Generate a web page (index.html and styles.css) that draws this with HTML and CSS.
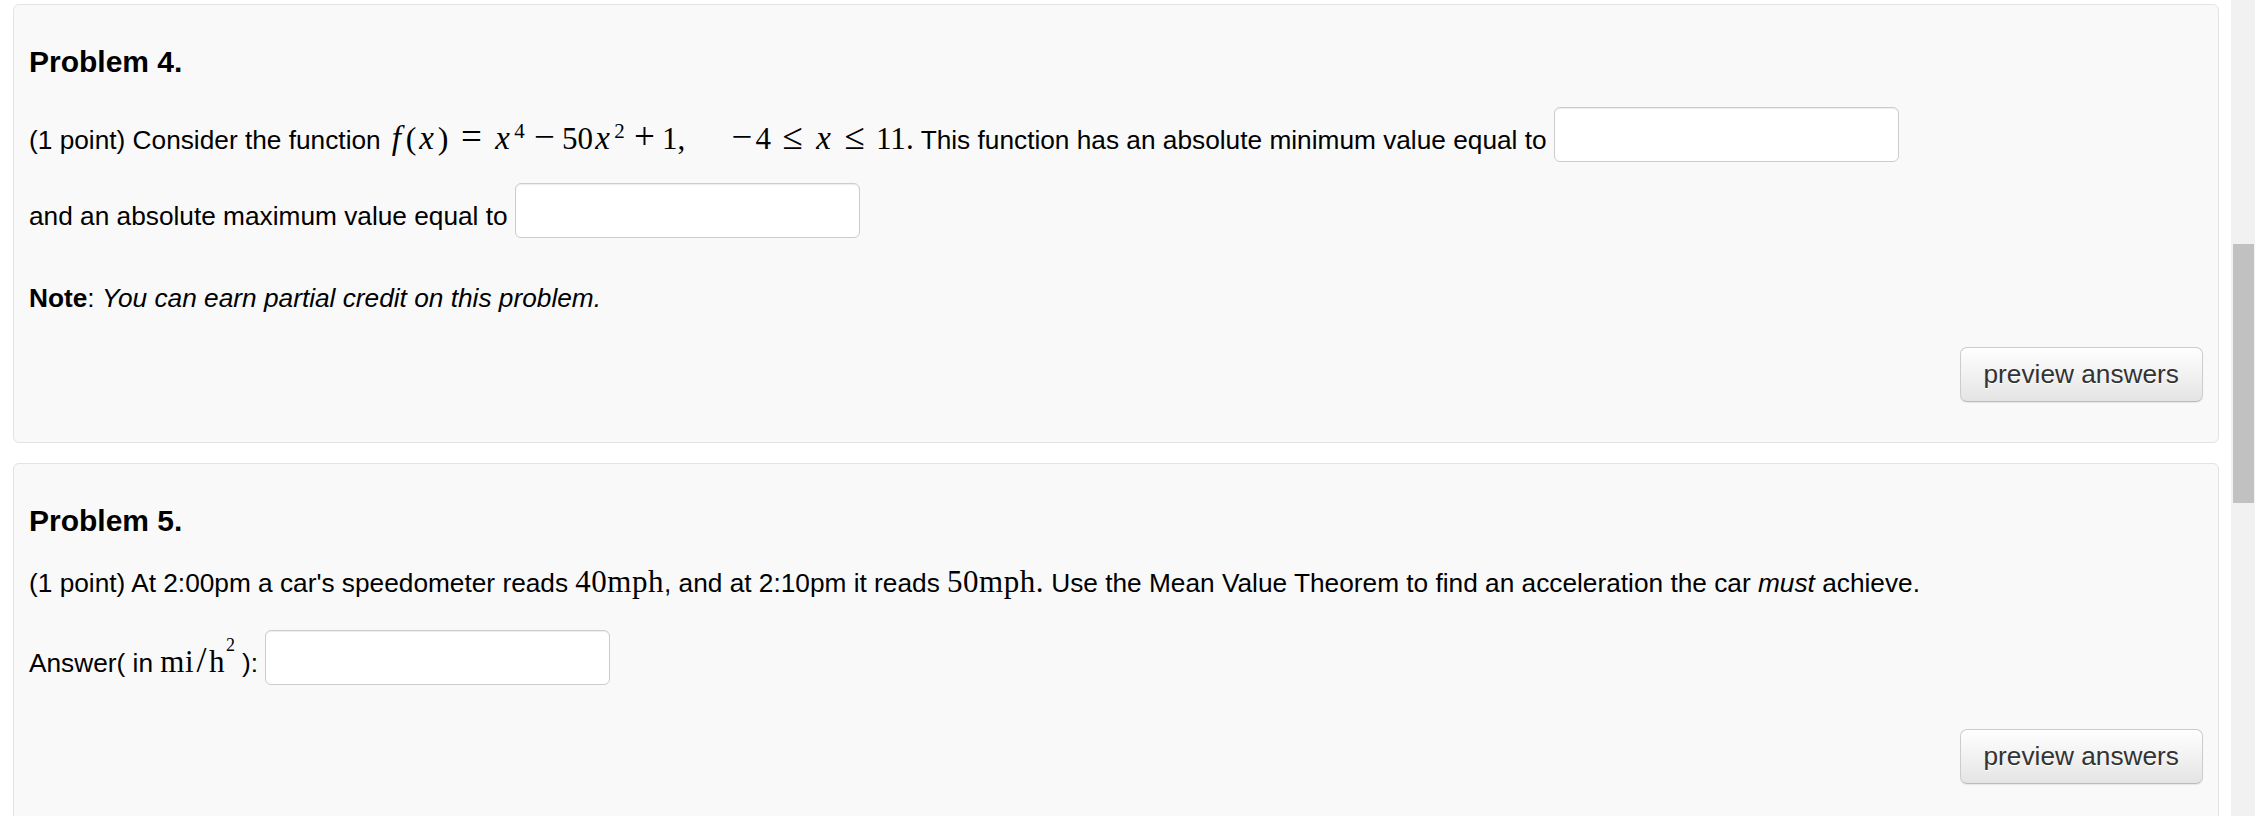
FILE: index.html
```html
<!DOCTYPE html>
<html lang="en">
<head>
<meta charset="utf-8">
<title>Problems</title>
<link rel="stylesheet" href="styles.css">
</head>
<body>
<main class="page">
  <section class="problem">
    <h3 class="problem-title">Problem 4.</h3>
    <p class="line line--lead">(1 point) Consider the function <span class="math"><span class="m mi mf">f</span><span class="m mlp">(</span><span class="m mi mx">x</span><span class="m mrp">)</span><span class="m mrel">=</span><span class="m mi mx">x</span><span class="m msup">4</span><span class="m mbin">&#8722;</span><span class="m">50</span><span class="m mi mx">x</span><span class="m msup">2</span><span class="m mbin">+</span><span class="m">1</span><span class="m mpunct">,</span><span class="m mquad"></span><span class="m mneg">&#8722;</span><span class="m">4</span><span class="m mrel">&#8804;</span><span class="m mi mx">x</span><span class="m mrel">&#8804;</span><span class="m">11</span><span class="m mpunct">.</span></span> This function has an absolute minimum value equal to <input class="answer" type="text" aria-label="absolute minimum"></p>
    <p class="line line--stacked">and an absolute maximum value equal to <input class="answer" type="text" aria-label="absolute maximum"></p>
    <p class="line line--note"><b>Note</b>: <i>You can earn partial credit on this problem.</i></p>
    <div class="actions"><button class="btn" type="button">preview answers</button></div>
  </section>
  <section class="problem">
    <h3 class="problem-title">Problem 5.</h3>
    <p class="line line--stacked">(1 point) At 2:00pm a car's speedometer reads <span class="m mrm">40mph</span>, and at 2:10pm it reads <span class="m mrm">50mph.</span> Use the Mean Value Theorem to find an acceleration the car <i>must</i> achieve.</p>
    <p class="line line--answer">Answer( in <span class="math"><span class="m mrm">mi</span><span class="m mslash">/</span><span class="m mrm">h</span><span class="m msup msup--high">2</span></span>): <input class="answer" type="text" aria-label="answer"></p>
    <div class="actions actions--spaced"><button class="btn" type="button">preview answers</button></div>
  </section>
</main>
<div class="scrollbar"><div class="scrollbar-thumb"></div></div>
</body>
</html>
```

FILE: styles.css
```css
html, body {
  margin: 0;
  height: 816px;
  overflow: hidden;
  background: #ffffff;
}

body {
  font-family: "Liberation Sans", Arial, sans-serif;
  font-size: 26.25px;
  color: #000;
}

.page {
  padding: 4px 12px 0 13px;
  margin-right: 24px;
}

.problem {
  background: #f9f9f9;
  border: 1px solid #e3e3e3;
  border-radius: 6px;
  padding: 37px 15px 40px;
  margin-bottom: 20px;
}

.problem-title {
  margin: 0;
  font-size: 30px;
  font-weight: bold;
  line-height: 40px;
}

.line {
  margin: 0;
  line-height: 68px;
  white-space: nowrap;
}

.line--lead { margin-top: 24px; }
.line--stacked { margin-top: 8px; }
.line--note { margin-top: 14px; }
.line--answer { margin-top: 12px; }

.actions {
  display: flex;
  justify-content: flex-end;
  margin-top: 15px;
}
.actions--spaced { margin-top: 32px; }

.btn {
  height: 55px;
  padding: 0 23px;
  font-family: "Liberation Sans", Arial, sans-serif;
  font-size: 26.25px;
  color: #333;
  border: 1px solid #cccccc;
  border-bottom-color: #bcbcbc;
  border-radius: 7px;
  background: linear-gradient(to bottom, #ffffff 0%, #e4e4e4 100%);
  box-shadow: inset 0 1px 0 rgba(255,255,255,.15), 0 1px 1px rgba(0,0,0,.075);
  text-shadow: 0 1px 0 #fff;
}

.answer {
  box-sizing: border-box;
  width: 345px;
  height: 55px;
  margin: 0;
  padding: 13px 12px 0;
  font-family: "Liberation Sans", Arial, sans-serif;
  font-size: 26.25px;
  line-height: normal;
  vertical-align: baseline;
  background: #fff;
  border: 1px solid #cccccc;
  border-radius: 6px;
  box-shadow: inset 0 1px 1px rgba(0,0,0,.075);
}

/* math tokens */
.m {
  display: inline-block;
  font-family: "Liberation Serif", "Times New Roman", serif;
  font-size: 31px;
  line-height: 30px;
  text-align: center;
}
.mi { font-style: italic; }
.mx { font-size: 33px; width: 19px; }
.mf { font-size: 33px; width: 17px; }
.mlp { width: 12px; font-size: 32px; }
.mrp { width: 14px; font-size: 32px; }
.mrel { width: 43px; font-size: 37px; }
.mbin { width: 35px; font-size: 37px; }
.mneg { width: 27px; font-size: 37px; }
.mquad { width: 43px; }
.mpunct { width: 8px; }
.msup {
  width: 15px;
  font-size: 21px;
  line-height: 21px;
  vertical-align: 11px;
}
.msup--high {
  width: 16px;
  margin-left: 1px;
  text-align: left;
  font-size: 18px;
  line-height: 18px;
  vertical-align: 21px;
}
.mrm { letter-spacing: 0.5px; }
.mslash { width: 15px; font-size: 36px; }

.scrollbar {
  position: fixed;
  top: 0;
  right: 0;
  width: 24px;
  height: 100%;
  background: #f1f1f1;
}
.scrollbar-thumb {
  position: absolute;
  top: 244px;
  left: 2px;
  width: 21px;
  height: 259px;
  background: #c1c1c1;
}
```
